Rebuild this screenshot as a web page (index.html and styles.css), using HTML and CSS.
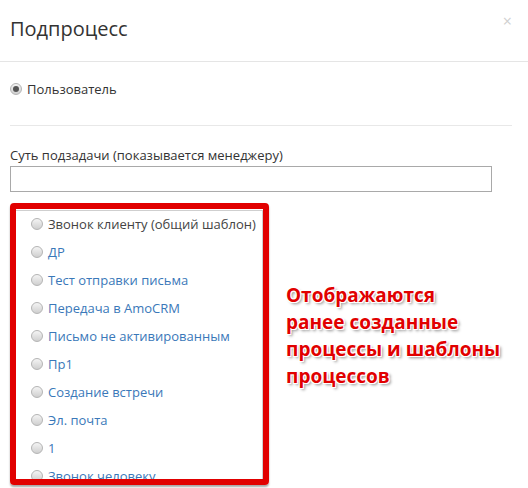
FILE: index.html
```html
<!DOCTYPE html>
<html lang="ru">
<head>
    <meta charset="UTF-8">
    <meta name="viewport" content="width=device-width, initial-scale=1.0">
    <title>Подпроцесс</title>
    <link rel="stylesheet" href="styles.css">
</head>
<body>
    <div class="modal">
        <div class="modal-header">
            <h4 class="modal-title">Подпроцесс</h4>
            <span class="close">&times;</span>
        </div>

        <div class="modal-body">
            <div class="user-row">
                <label class="opt"><span class="radio checked"></span>Пользователь</label>
            </div>

            <div class="field">
                <label class="field-label">Суть подзадачи (показывается менеджеру)</label>
                <input class="field-input" type="text">
            </div>

            <div class="pick-row">
                <div class="red-box">
                    <ul class="proc-list">
                        <li class="opt plain"><span class="radio"></span>Звонок клиенту (общий шаблон)</li>
                        <li class="opt"><span class="radio"></span>ДР</li>
                        <li class="opt"><span class="radio"></span>Тест отправки письма</li>
                        <li class="opt"><span class="radio"></span>Передача в AmoCRM</li>
                        <li class="opt"><span class="radio"></span>Письмо не активированным</li>
                        <li class="opt"><span class="radio"></span>Пр1</li>
                        <li class="opt"><span class="radio"></span>Создание встречи</li>
                        <li class="opt"><span class="radio"></span>Эл. почта</li>
                        <li class="opt"><span class="radio"></span>1</li>
                        <li class="opt"><span class="radio"></span>Звонок человеку</li>
                    </ul>
                </div>
                <p class="note">Отображаются<br>ранее созданные<br>процессы и шаблоны<br>процессов</p>
            </div>
        </div>
    </div>
</body>
</html>
```

FILE: styles.css
```css
body{margin: 0; padding: 0; background: #fff; font-family: "Open Sans", "Liberation Sans", sans-serif; color: #333;}

.modal{width: 528px; height: 488px; overflow: hidden;}

.modal-header{
    height: 61px;
    border-bottom: 1px solid #e5e5e5;
    display: flex;
    justify-content: space-between;
    align-items: flex-start;
    padding: 0 10px;
}
.modal-title{margin: 15px 0 0; font-size: 20px; font-weight: 400; line-height: 28px; color: #333;}
.close{margin: 8px 6px 0 0; font-size: 16px; line-height: 26px; color: #d0d0d0;}

.modal-body{padding: 0 10px;}

.user-row{
    height: 63px;
    border-bottom: 1px solid #e8e8e8;
    margin-right: 6px;
}
.user-row .opt{padding-top: 17px;}

.opt{display: flex; align-items: center; font-size: 13px; line-height: 20px;}

.radio{
    width: 10px;
    height: 10px;
    margin-right: 5px;
    border-radius: 50%;
    border: 1px solid #b4b4b4;
    background: linear-gradient(#f4f4f4, #cfcfcf);
    flex: none;
    position: relative;
}
.radio.checked::after{
    content: "";
    position: absolute;
    left: 2px;
    top: 2px;
    width: 6px;
    height: 6px;
    border-radius: 50%;
    background: #555;
}

.field{padding-top: 19px;}
.field-label{display: block; font-size: 13px; line-height: 20px; margin-bottom: 1px;}
.field-input{
    display: block;
    box-sizing: border-box;
    width: 482px;
    height: 26px;
    margin: 0;
    border: 1px solid #a9a9a9;
    background: #fff;
}

.pick-row{display: flex; align-items: flex-start; margin-top: 11px;}

.red-box{
    width: 247px;
    height: 270px;
    border: 6px solid #e10000;
    border-radius: 4px;
    box-shadow: 0 2px 2px rgba(0, 0, 0, 0.35);
    overflow: hidden;
    flex: none;
}

.proc-list{
    list-style: none;
    margin: 1px 0 0;
    padding: 0 0 0 15px;
    border-top: 1px solid #cfcfcf;
    border-right: 1px solid #cfcfcf;
}
.proc-list .opt{height: 28px; color: #3a78b9; margin-top: -1px; margin-bottom: 1px;}
.proc-list .opt.plain{color: #444;}

.note{
    margin: 79px 0 0 17px;
    font-size: 19px;
    font-weight: 700;
    line-height: 27px;
    color: #e10000;
    text-shadow: 1px 1px 0 #fff, -1px -1px 0 #fff, 1px -1px 0 #fff, -1px 1px 0 #fff, 2px 2px 3px rgba(0, 0, 0, 0.45);
}
```
